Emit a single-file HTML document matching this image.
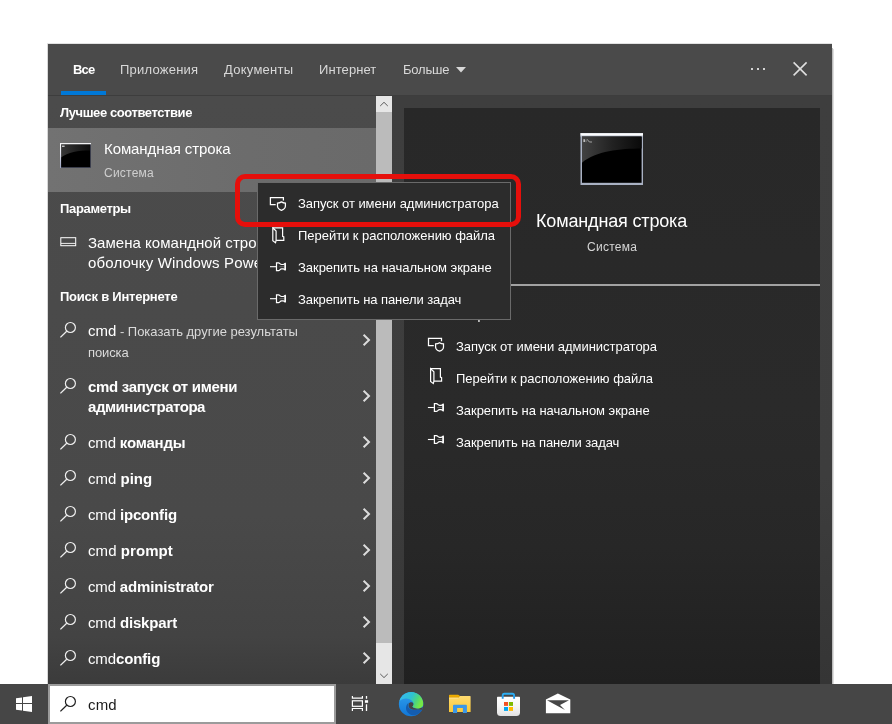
<!DOCTYPE html>
<html lang="ru">
<head>
<meta charset="utf-8">
<title>Поиск Windows: cmd</title>
<style>
html,body{margin:0;padding:0;}
body{width:892px;height:724px;position:relative;overflow:hidden;background:#ffffff;font-family:"Liberation Sans",sans-serif;}
.a{position:absolute;}
.t{position:absolute;will-change:transform;white-space:nowrap;line-height:20px;font-family:"Liberation Sans",sans-serif;font-weight:400;}
.t b{font-weight:700;}
svg{position:absolute;overflow:visible;}
#panel{left:48px;top:44px;width:784px;height:640px;background:#444444;}
#header{left:48px;top:44px;width:784px;height:51px;background:#4a4a4a;}
#hline{left:48px;top:95px;width:784px;height:1px;background:#3d3d3d;}
#bluebar{left:61px;top:91px;width:45px;height:4px;background:#0078d7;}
#leftcol{left:48px;top:96px;width:328px;height:588px;background:linear-gradient(180deg,#4b4b4b 0px,#494949 420px,#434343 540px,#3b3b3b 588px);}
#sel{left:48px;top:128px;width:328px;height:64px;background:linear-gradient(90deg,#727272 0px,#6c6c6c 200px,#6a6a6a 328px);}
#track{left:376px;top:96px;width:16px;height:588px;background:#e6e6e6;}
#thumb{left:376px;top:112px;width:16px;height:531px;background:#bbbbbb;}
#rightbg{left:392px;top:96px;width:440px;height:588px;background:linear-gradient(180deg,#3e3e3e 0px,#3d3d3d 380px,#353535 588px);}
#card{left:404px;top:108px;width:416px;height:576px;background:linear-gradient(180deg,#282828 0px,#2a2a2a 300px,#272727 440px,#202020 576px);}
#divider{left:404px;top:284px;width:416px;height:2px;background:#a2a2a2;}
#taskbar{left:0;top:684px;width:892px;height:40px;background:#464646;}
#sbox{left:48px;top:684px;width:288px;height:40px;background:#ffffff;box-sizing:border-box;border:2px solid #9b9b9b;}
#menu{left:257px;top:182px;width:254px;height:138px;box-sizing:border-box;background:#2c2c2c;border:1px solid #6a6a6a;}
#red{left:235px;top:174px;width:286px;height:53px;box-sizing:border-box;border:5px solid #e60f0b;border-radius:10px;}
</style>
</head>
<body>
<div class="a" id="panel"></div>
<div class="a" style="left:832px;top:48px;width:1px;height:636px;background:#bcbcbc"></div>
<div class="a" style="left:833px;top:49px;width:1px;height:635px;background:#dedede"></div>
<div class="a" style="left:47px;top:43px;width:785px;height:1px;background:#e2e2e2"></div>
<div class="a" style="left:47px;top:44px;width:1px;height:640px;background:#d8d8d8"></div>
<div class="a" id="header"></div>
<div class="a" id="hline"></div>
<div class="a" id="bluebar"></div>
<div class="a" id="leftcol"></div>
<div class="a" id="sel"></div>
<div class="a" id="track"></div>
<div class="a" id="thumb"></div>
<div class="a" id="rightbg"></div>
<div class="a" id="card"></div>
<div class="a" id="divider"></div>
<div class="a" id="taskbar"></div>
<div class="a" id="sbox"></div>

<!-- ICONS-BASE -->
<svg id="icons" style="left:0;top:0" width="892" height="724" viewBox="0 0 892 724">
<defs>
 <g id="mag" fill="none" stroke-linecap="butt">
  <circle cx="2.4" cy="-2.5" r="5" stroke-width="1.2"/>
  <path d="M-1.3 1.2 L-7.6 7.4" stroke-width="1.3"/>
 </g>
 <path id="chev" d="M-3.2 -5.2 L2.2 0 L-3.2 5.2" fill="none" stroke="#dcdcdc" stroke-width="2"/>
 <g id="ic_admin" fill="none" stroke="#ffffff" stroke-width="1.25">
  <path d="M5.9 7.8 H0.6 V0.6 H13.6 V3.5"/>
  <path d="M11.65 5 C10.4 5.8 9 6.1 7.7 6.1 V9.1 C7.7 11.3 9.5 12.6 11.65 13.4 C13.8 12.6 15.6 11.3 15.6 9.1 V6.1 C14.3 6.1 12.9 5.8 11.65 5 Z"/>
 </g>
 <g id="ic_file" fill="none" stroke="#ffffff" stroke-width="1.2" stroke-linejoin="miter">
  <path d="M0.6 0.6 H10.4 V9.1 L11.6 9.7 V13.2 H3.9"/>
  <path d="M0.6 0.6 L3.9 3.8 V13.2 L3.3 15.5 L0.6 13.5 Z"/>
 </g>
 <g id="ic_pin" fill="none" stroke="#ffffff">
  <path d="M0 4.5 H6" stroke-width="1.1"/>
  <path d="M6.5 0.6 H8.6 C9.8 0.6 10 2.3 11.6 2.3 H13.3 C14.3 2.3 14.5 1.2 15.3 1.2 V7.8 C14.5 7.8 14.3 6.7 13.3 6.7 H11.6 C10 6.7 9.8 8.4 8.6 8.4 H6.5 Z" stroke-width="1.2"/>
  <path d="M15.2 1.2 V7.8" stroke-width="1.5"/>
  <path d="M9.4 4.5 H14" stroke="#8c8c8c" stroke-width="0.7"/>
 </g>
 <linearGradient id="gloss" x1="0" y1="0" x2="1" y2="0">
  <stop offset="0" stop-color="#383838"/><stop offset="0.5" stop-color="#222222"/><stop offset="1" stop-color="#0e0e0e"/>
 </linearGradient>
 <linearGradient id="gloss2" x1="0" y1="0" x2="1" y2="0">
  <stop offset="0" stop-color="#424242"/><stop offset="0.5" stop-color="#222222"/><stop offset="1" stop-color="#0a0a0a"/>
 </linearGradient>
 <linearGradient id="edgeL" x1="0" y1="0" x2="0" y2="1">
  <stop offset="0" stop-color="#ffffff"/><stop offset="0.4" stop-color="#e6e8f2"/><stop offset="1" stop-color="#9aa2c0"/>
 </linearGradient>
 <linearGradient id="topbar" x1="0" y1="0" x2="0" y2="1">
  <stop offset="0" stop-color="#dfe3ea"/><stop offset="0.4" stop-color="#ffffff"/><stop offset="1" stop-color="#b9c0cf"/>
 </linearGradient>
</defs>

<!-- header dots / close / triangle -->
<rect x="751" y="68" width="2" height="2" fill="#d4d4d4"/><rect x="757" y="68" width="2" height="2" fill="#d4d4d4"/><rect x="763" y="68" width="2" height="2" fill="#d4d4d4"/>
<path d="M793.6 62.4 L806.6 75.4 M806.6 62.4 L793.6 75.4" stroke="#dedede" stroke-width="1.6" fill="none"/>
<path d="M456 67 H466 L461 72.4 Z" fill="#d8d8d8"/>

<!-- scrollbar arrows -->
<path d="M380.2 106 L384 102.3 L387.8 106" fill="none" stroke="#5c5c5c" stroke-width="1"/>
<path d="M380.2 673.9 L384 677.6 L387.8 673.9" fill="none" stroke="#5c5c5c" stroke-width="1"/>

<!-- small cmd icon -->
<g>
 <rect x="60" y="143" width="31" height="25" fill="#000000"/>
 <path d="M61 144.2 H90 V150.4 C78 150.4 68 152.2 61 157.6 Z" fill="url(#gloss)"/>
 <rect x="60" y="167.2" width="31" height="0.8" fill="#4a4e60"/>
 <rect x="90.2" y="143" width="0.8" height="25" fill="#4a4e60"/>
 <rect x="60" y="143" width="1.1" height="25" fill="url(#edgeL)"/>
 <rect x="60" y="143" width="31" height="1.3" fill="#f2f2f4"/>
 <rect x="62" y="145.6" width="2.6" height="1.3" fill="#d0d0d0"/>
</g>
<!-- large cmd icon -->
<g>
 <rect x="580.5" y="133" width="62.5" height="52" fill="#a9b1c3"/>
 <rect x="580.5" y="133" width="62.5" height="3.6" fill="url(#topbar)"/>
 <rect x="582" y="136.6" width="59.6" height="46.2" fill="#000000"/>
 <path d="M582 136.6 H641.6 V148.6 C620 148.6 596 151 582 162.8 Z" fill="url(#gloss2)"/>
 <rect x="583.4" y="139.2" width="1.6" height="2.8" fill="#bdbdbd"/>
 <rect x="585.6" y="139.8" width="0.9" height="0.9" fill="#a0a0a0"/><rect x="585.6" y="141.2" width="0.9" height="0.9" fill="#a0a0a0"/>
 <path d="M587 139.2 L589.4 142" stroke="#bdbdbd" stroke-width="0.8"/>
 <rect x="589.4" y="141.6" width="2.6" height="0.8" fill="#bdbdbd"/>
</g>

<!-- settings row icon -->
<g fill="none" stroke="#ffffff" stroke-width="1">
 <rect x="60.8" y="237.7" width="14.9" height="8"/>
 <path d="M61 243.4 H75.5" stroke-width="0.9"/>
</g>

<!-- magnifiers -->
<g stroke="#f0f0f0">
 <use href="#mag" x="68" y="330"/>
 <use href="#mag" x="68" y="386"/>
 <use href="#mag" x="68" y="442"/>
 <use href="#mag" x="68" y="478"/>
 <use href="#mag" x="68" y="514"/>
 <use href="#mag" x="68" y="550"/>
 <use href="#mag" x="68" y="586"/>
 <use href="#mag" x="68" y="622"/>
 <use href="#mag" x="68" y="658"/>
</g>
<g stroke="#202020"><use href="#mag" x="68" y="704"/></g>

<!-- chevrons -->
<use href="#chev" x="366.8" y="340"/>
<use href="#chev" x="366.8" y="396"/>
<use href="#chev" x="366.8" y="442"/>
<use href="#chev" x="366.8" y="478"/>
<use href="#chev" x="366.8" y="514"/>
<use href="#chev" x="366.8" y="550"/>
<use href="#chev" x="366.8" y="586"/>
<use href="#chev" x="366.8" y="622"/>
<use href="#chev" x="366.8" y="658"/>

<!-- right action icons -->
<use href="#ic_admin" x="427.9" y="337.8"/>
<use href="#ic_file" x="430" y="368"/>
<use href="#ic_pin" x="427.9" y="403"/>
<use href="#ic_pin" x="427.9" y="435"/>

<!-- taskbar icons -->
<g fill="#ffffff">
 <path d="M16 698.3 L22 697.45 V703 H16 Z M23 697.3 L32 696 V703 H23 Z M16 704 H22 V710.55 L16 709.7 Z M23 704 H32 V712 L23 710.7 Z"/>
</g>
<!-- task view -->
<g fill="none" stroke="#ffffff" stroke-width="1.2">
 <path d="M352.4 696.1 V698.2 H362.4 V696.1"/>
 <rect x="352.4" y="700.8" width="10" height="5.5"/>
 <path d="M352.4 711 V708.5 H362.4 V711"/>
 <path d="M366.5 696.1 V698.8 M366.5 704.2 V711" stroke-width="1.3"/>
</g>
<rect x="364.9" y="700.2" width="3.2" height="2.6" fill="#ffffff"/>
<!-- edge -->
<g transform="translate(399,692)">
 <defs>
  <linearGradient id="eg1" x1="0" y1="0" x2="0" y2="1"><stop offset="0.3" stop-color="#2794e6"/><stop offset="1" stop-color="#0f74d6"/></linearGradient>
  <linearGradient id="eg2" x1="0" y1="0" x2="1" y2="0.35"><stop offset="0" stop-color="#38b8f8"/><stop offset="0.55" stop-color="#2fc2d0"/><stop offset="0.8" stop-color="#4ed67c"/><stop offset="1" stop-color="#74e848"/></linearGradient>
  <clipPath id="ecl"><circle cx="12.1" cy="12.15" r="12.2"/></clipPath>
 </defs>
 <g clip-path="url(#ecl)">
  <rect x="-1" y="-1" width="27" height="27" fill="url(#eg1)"/>
  <path d="M9.8 10.4 C8.4 12.4 8.6 15 10.8 16.7 C12.6 18 15 18.1 19 17.7 L25 17.9 L25 19 C22.5 21 19 22.8 14.6 23.2 C11.6 23.3 9 21.6 7.7 19 C6.5 16.4 6.8 12.6 9.8 10.4 Z" fill="#145db0"/>
  <path d="M9.7 11.8 C10.2 10.4 12.4 9.9 13.8 10.8 C15 11.6 15 13.2 13.4 14.6 C13.6 16 16 16.5 18.6 16.4 L25.5 15 L25.5 18 L19 17.6 C15 18 12.6 17.8 11 16.5 C9.6 15.2 9.2 13.4 9.7 11.8 Z" fill="#454545"/>
  <path d="M0 9.4 C1.3 3.6 6.2 -0.3 12 -0.3 C18.9 -0.3 24.5 5 24.5 11.4 C24.5 14.6 21.8 16.4 18.6 16.4 C16.2 16.4 13.8 15.8 13.4 14.6 C14.5 13.6 15 12.5 14.6 11.2 C13.8 8.7 11 6.8 7.6 6.5 C4.8 6.3 2.2 7.3 0 9.4 Z" fill="url(#eg2)"/>
 </g>
</g>
<!-- folder -->
<defs>
 <linearGradient id="fg1" x1="0" y1="0" x2="0" y2="1"><stop offset="0" stop-color="#fedb72"/><stop offset="1" stop-color="#fcc936"/></linearGradient>
 <linearGradient id="fg2" x1="0" y1="0" x2="0" y2="1"><stop offset="0" stop-color="#f2b200"/><stop offset="1" stop-color="#dc9a00"/></linearGradient>
 <linearGradient id="bg1" x1="0" y1="0" x2="0" y2="1"><stop offset="0" stop-color="#ffffff"/><stop offset="0.5" stop-color="#f6f6f6"/><stop offset="1" stop-color="#e2e2e2"/></linearGradient>
 <linearGradient id="hg1" x1="0" y1="0" x2="0" y2="1"><stop offset="0" stop-color="#2db0f4"/><stop offset="1" stop-color="#1a8ee2"/></linearGradient>
</defs>
<path d="M449 695.5 C449 695.1 449.3 694.8 449.7 694.8 H458.2 L460 696.1 V698.4 H449 Z" fill="url(#fg2)"/>
<path d="M449 697.7 H458.5 L460.1 695.9 H470.1 C470.4 695.9 470.6 696.1 470.6 696.4 V712 H449 Z" fill="url(#fg1)"/>
<rect x="449" y="697.7" width="9.4" height="0.7" fill="#ffe9a8"/>
<path d="M453 713.1 V705.7 C453 705.2 453.4 704.8 453.9 704.8 H466 C466.5 704.8 466.9 705.2 466.9 705.7 V713.1 H462.9 V708.1 H457.1 V713.1 Z" fill="#3b97e8"/>
<!-- store -->
<path d="M497 697.7 C497 697.1 497.4 696.7 498 696.7 H519 C519.6 696.7 520 697.1 520 697.7 V712.4 C520 714.6 518.6 716 516.4 716 H500.6 C498.4 716 497 714.6 497 712.4 Z" fill="url(#bg1)"/>
<path d="M502.7 698.8 V695.4 C502.7 694.3 503.3 693.75 504.4 693.75 H512.4 C513.5 693.75 514.1 694.3 514.1 695.4 V698.8" fill="none" stroke="url(#hg1)" stroke-width="1.9"/>
<rect x="504" y="702" width="4" height="3.9" fill="#f25022"/>
<rect x="508.9" y="702" width="4.1" height="3.9" fill="#7fba00"/>
<rect x="504" y="707" width="4" height="3.9" fill="#00a4ef"/>
<rect x="508.9" y="707" width="4.1" height="3.9" fill="#ffb900"/>
<!-- mail -->
<path d="M545.9 699.4 L557.9 693.4 L570.3 699.4 V713.2 H545.9 Z" fill="#ffffff"/>
<path d="M547 700.2 H569 L560 704.9 L565 709.9 Z" fill="#464646"/>
</svg>

<div id="t_all" class="t" style="left:73.00px;top:59.50px;font-size:13px;color:#ffffff;letter-spacing:-0.853px"><b>Все</b></div>
<div id="t_apps" class="t" style="left:120.10px;top:59.50px;font-size:13px;color:#d8d8d8;letter-spacing:0.224px">Приложения</div>
<div id="t_docs" class="t" style="left:223.50px;top:59.50px;font-size:13px;color:#d8d8d8;letter-spacing:0.254px">Документы</div>
<div id="t_inet" class="t" style="left:319.10px;top:59.50px;font-size:13px;color:#d8d8d8;letter-spacing:0.083px">Интернет</div>
<div id="t_more" class="t" style="left:403.00px;top:59.50px;font-size:13px;color:#d8d8d8;letter-spacing:-0.183px">Больше</div>
<div id="t_best" class="t" style="left:59.70px;top:102.80px;font-size:13px;color:#ffffff;letter-spacing:-0.414px"><b>Лучшее соответствие</b></div>
<div id="t_cmdl" class="t" style="left:103.50px;top:138.60px;font-size:15px;color:#ffffff;letter-spacing:-0.093px">Командная строка</div>
<div id="t_sysl" class="t" style="left:103.50px;top:163.14px;font-size:12px;color:#cfcfcf;letter-spacing:0.225px">Система</div>
<div id="t_param" class="t" style="left:59.80px;top:198.50px;font-size:13px;color:#ffffff;letter-spacing:-0.338px"><b>Параметры</b></div>
<div id="t_rep1" class="t" style="left:87.50px;top:232.80px;font-size:15px;color:#ffffff;letter-spacing:0.033px">Замена командной строки на</div>
<div id="t_rep2" class="t" style="left:87.50px;top:252.50px;font-size:15px;color:#ffffff;letter-spacing:0.173px">оболочку Windows PowerShell в</div>
<div id="t_web" class="t" style="left:59.80px;top:286.50px;font-size:13px;color:#ffffff;letter-spacing:-0.239px"><b>Поиск в Интернете</b></div>
<div id="t_s1" class="t" style="left:87.50px;top:320.70px;font-size:15px;color:#ffffff;letter-spacing:-0.015px">cmd<span style="font-size:13px;color:#dadada"> - Показать другие результаты</span></div>
<div id="t_s1b" class="t" style="left:87.50px;top:342.50px;font-size:13px;color:#dadada;letter-spacing:-0.113px">поиска</div>
<div id="t_s2" class="t" style="left:87.60px;top:377.40px;font-size:15px;color:#ffffff;letter-spacing:-0.300px"><b>cmd запуск от имени</b></div>
<div id="t_s2b" class="t" style="left:87.50px;top:396.60px;font-size:15px;color:#ffffff;letter-spacing:-0.463px"><b>администратора</b></div>
<div id="t_s3" class="t" style="left:87.50px;top:432.60px;font-size:15px;color:#ffffff;letter-spacing:-0.185px">cmd <b>команды</b></div>
<div id="t_s4" class="t" style="left:87.50px;top:468.80px;font-size:15px;color:#ffffff;letter-spacing:-0.009px">cmd <b>ping</b></div>
<div id="t_s5" class="t" style="left:87.50px;top:504.80px;font-size:15px;color:#ffffff;letter-spacing:-0.154px">cmd <b>ipconfig</b></div>
<div id="t_s6" class="t" style="left:87.50px;top:540.80px;font-size:15px;color:#ffffff;letter-spacing:0.071px">cmd <b>prompt</b></div>
<div id="t_s7" class="t" style="left:87.50px;top:576.80px;font-size:15px;color:#ffffff;letter-spacing:-0.163px">cmd <b>administrator</b></div>
<div id="t_s8" class="t" style="left:87.50px;top:612.80px;font-size:15px;color:#ffffff;letter-spacing:-0.156px">cmd <b>diskpart</b></div>
<div id="t_s9" class="t" style="left:87.50px;top:648.80px;font-size:15px;color:#ffffff;letter-spacing:-0.127px">cmd<b>config</b></div>
<div id="t_q" class="t" style="left:87.50px;top:694.80px;font-size:15px;color:#1a1a1a;letter-spacing:0.185px">cmd</div>
<div id="t_title" class="t" style="left:536.30px;top:211.36px;font-size:18px;color:#ffffff;letter-spacing:-0.155px">Командная строка</div>
<div id="t_sysr" class="t" style="left:586.80px;top:236.64px;font-size:12px;color:#d6d6d6;letter-spacing:0.267px">Система</div>
<div id="t_open" class="t" style="left:455.70px;top:305.20px;font-size:13px;color:#ffffff;letter-spacing:-0.113px">Открыть</div>
<div id="t_a1" class="t" style="left:455.70px;top:337.20px;font-size:13px;color:#ffffff;letter-spacing:-0.029px">Запуск от имени администратора</div>
<div id="t_a2" class="t" style="left:455.70px;top:369.20px;font-size:13px;color:#ffffff;letter-spacing:-0.033px">Перейти к расположению файла</div>
<div id="t_a3" class="t" style="left:455.70px;top:401.20px;font-size:13px;color:#ffffff;letter-spacing:-0.032px">Закрепить на начальном экране</div>
<div id="t_a4" class="t" style="left:455.70px;top:433.20px;font-size:13px;color:#ffffff;letter-spacing:-0.072px">Закрепить на панели задач</div>

<div class="a" id="menu"></div>
<svg style="left:0;top:0" width="892" height="724" viewBox="0 0 892 724">
<use href="#ic_admin" x="269.8" y="196.9"/>
<use href="#ic_file" x="272.2" y="227.2"/>
<use href="#ic_pin" x="270" y="262.2"/>
<use href="#ic_pin" x="270" y="294.2"/>
</svg>
<div id="t_m1" class="t" style="left:297.70px;top:193.90px;font-size:13px;color:#ffffff;letter-spacing:-0.039px">Запуск от имени администратора</div>
<div id="t_m2" class="t" style="left:297.70px;top:225.90px;font-size:13px;color:#ffffff;letter-spacing:-0.033px">Перейти к расположению файла</div>
<div id="t_m3" class="t" style="left:297.70px;top:257.90px;font-size:13px;color:#ffffff;letter-spacing:-0.032px">Закрепить на начальном экране</div>
<div id="t_m4" class="t" style="left:297.70px;top:289.90px;font-size:13px;color:#ffffff;letter-spacing:-0.072px">Закрепить на панели задач</div>
<div class="a" id="red"></div>
</body>
</html>
